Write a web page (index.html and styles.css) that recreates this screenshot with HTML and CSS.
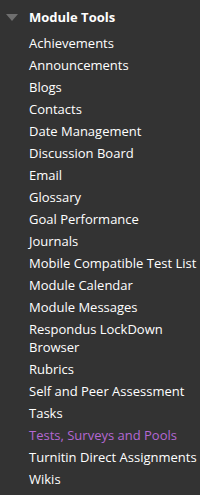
FILE: index.html
```html
<!DOCTYPE html>
<html lang="en">
<head>
  <meta charset="UTF-8" />
  <title>Module Tools</title>
  <link rel="stylesheet" href="styles.css">
</head>
<body>
  <!-- Module tools menu -->
  <div class="menu">
    <div class="menu-head">
      <svg class="toggle" width="12" height="7" viewBox="0 0 12 7"><polygon points="0,0 12,0 6,7" fill="#6f6f6f"/></svg>
      <span>Module Tools</span>
    </div>
    <ul class="tools">
      <li><a href="#">Achievements</a></li>
      <li><a href="#">Announcements</a></li>
      <li><a href="#">Blogs</a></li>
      <li><a href="#">Contacts</a></li>
      <li><a href="#">Date Management</a></li>
      <li><a href="#">Discussion Board</a></li>
      <li><a href="#">Email</a></li>
      <li><a href="#">Glossary</a></li>
      <li><a href="#">Goal Performance</a></li>
      <li><a href="#">Journals</a></li>
      <li><a href="#">Mobile Compatible Test List</a></li>
      <li><a href="#">Module Calendar</a></li>
      <li><a href="#">Module Messages</a></li>
      <li><a href="#">Respondus LockDown Browser</a></li>
      <li><a href="#">Rubrics</a></li>
      <li><a href="#">Self and Peer Assessment</a></li>
      <li><a href="#">Tasks</a></li>
      <li><a href="#" class="visited">Tests, Surveys and Pools</a></li>
      <li><a href="#">Turnitin Direct Assignments</a></li>
      <li><a href="#">Wikis</a></li>
    </ul>
  </div>
</body>
</html>
```

FILE: styles.css
```css
* { box-sizing: border-box; margin: 0; padding: 0; }
html, body { background: #333333; }
body { font-family: "Open Sans", Arial, sans-serif; font-size: 13px; color: #fff; }

/* ===== Menu ===== */
.menu { padding-top: 8px; }
.menu-head { display: flex; align-items: center; height: 18px; line-height: 18px; font-weight: bold; }
.menu-head .toggle { margin: 0 11px 0 6px; }
.tools { list-style: none; padding: 6px 0 0 29px; }
.tools li { padding: 2px 0; line-height: 18px; }
.tools a { color: #fff; text-decoration: none; }
.tools a.visited { color: #b468d4; }
.tools a:hover { text-decoration: underline; }
```
